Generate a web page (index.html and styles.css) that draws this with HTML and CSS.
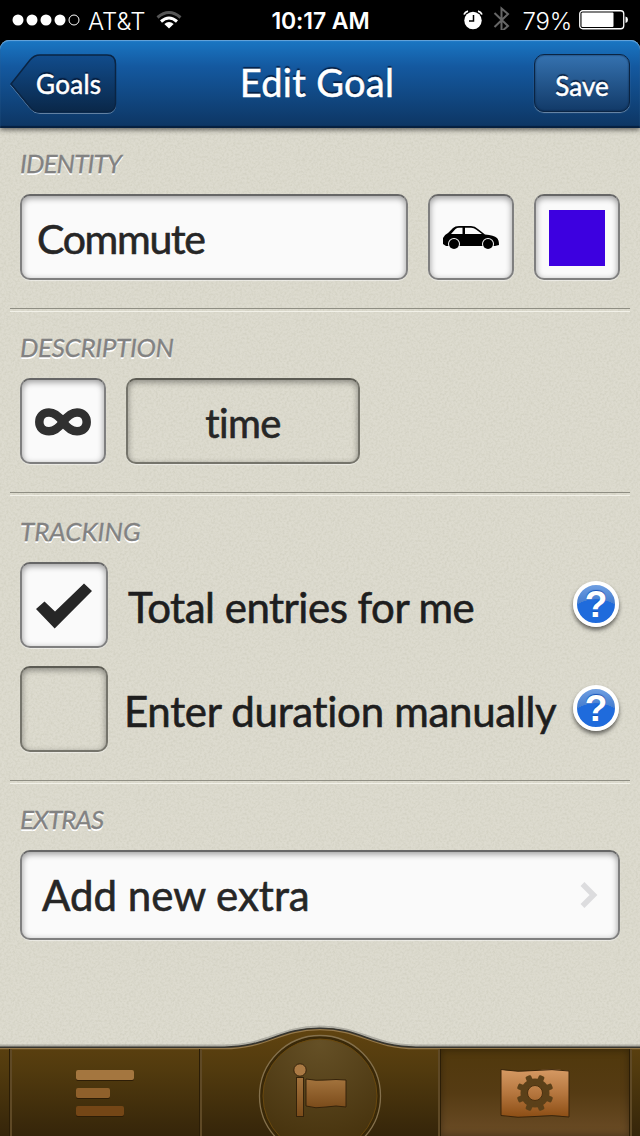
FILE: index.html
```html
<!DOCTYPE html>
<html lang="en">
<head>
    <meta charset="UTF-8">
    <meta name="viewport" content="width=device-width, initial-scale=1.0">
    <title>Edit Goal</title>
    <link rel="stylesheet" href="styles.css">
</head>
<body>

    <div class="status">
        <div class="status-left">
            <svg width="68" height="12" viewBox="0 0 68 12" fill="#fff">
                <circle cx="6" cy="6" r="5.5"/><circle cx="20" cy="6" r="5.5"/><circle cx="34" cy="6" r="5.5"/><circle cx="48" cy="6" r="5.5"/>
                <circle cx="62" cy="6" r="5" fill="none" stroke="#fff"/>
            </svg>
            <span class="carrier">AT&amp;T</span>
            <svg class="wifi" width="26" height="20" viewBox="0 0 26 20" fill="none" stroke="#fff" stroke-width="3">
                <path d="M1.5 7.5Q13-2.5 24.5 7.5" stroke="#555"/>
                <path d="M5 11.5Q13 4.5 21 11.5"/>
                <path d="M13 18.5L8.3 14Q13 10 17.7 14Z" fill="#fff" stroke="none"/>
            </svg>
        </div>
        <span class="clock">10:17 AM</span>
        <div class="status-right">
            <svg class="alarm" width="20" height="20" viewBox="0 0 20 20">
                <circle cx="10" cy="10.5" r="8.7" fill="#fff"/>
                <path d="M1 4.5Q2 2 5 1.2M19 4.5Q18 2 15 1.2" fill="none" stroke="#fff" stroke-width="1.8"/>
                <path d="M10.5 5V11H6" fill="none" stroke="#000" stroke-width="1.5"/>
            </svg>
            <svg class="bluetooth" width="18" height="28" viewBox="0 0 18 28" fill="none" stroke="#666" stroke-width="2">
                <path d="M1.5 7L15 20L8.5 25.5V2.5L15 8L1.5 21"/>
            </svg>
            <span class="percent">79%</span>
            <svg class="battery" width="50" height="20" viewBox="0 0 50 20">
                <rect x=".75" y=".75" width="44" height="18" rx="3" fill="none" stroke="#fff" stroke-width="1.3"/>
                <rect x="2.5" y="2.5" width="32" height="14.5" rx="1" fill="#fff"/>
                <path d="M46.5 6.5Q49 7 49 9.75T46.5 13Z" fill="#fff"/>
            </svg>
        </div>
    </div>

    <header class="navbar">
        <a class="back">
            <svg class="back-shape" width="108" height="62" viewBox="0 0 108 62">
                <defs>
                    <linearGradient id="backFill" x1="0" y1="0" x2="0" y2="1">
                        <stop offset="0" stop-color="#114c8c"/>
                        <stop offset="1" stop-color="#0a2748"/>
                    </linearGradient>
                </defs>
                <path d="M1 30L20 6Q24 1 30 1H97Q105.500 1 105.500 10V49Q105.500 58 97 58H30Q24 58 20 53Z" transform="translate(0 1.5)" fill="none" stroke="#fff" stroke-opacity=".35"/>
                <path d="M1 30L20 6Q24 1 30 1H97Q105.500 1 105.500 10V49Q105.500 58 97 58H30Q24 58 20 53Z" fill="url(#backFill)" stroke="#0a2443" stroke-width="1.5"/>
            </svg>
            <span class="back-text">Goals</span>
        </a>
        <h1>Edit Goal</h1>
        <a class="save">Save</a>
    </header>

    <main>
        <section>
            <h2 class="tight">IDENTITY</h2>
            <div class="row">
                <div class="box name">Commute</div>
                <div class="box square">
                    <svg width="56" height="24" viewBox="0 0 56 24">
                        <path d="M3 20L0 18V12Q1 9 5 7L10 2Q12 0 16 0H28Q32 0 35 3L42 8.5Q51 9 54 12Q56 14 56 19L52 20Z"/>
                        <path d="M8 8L12.5 3Q14 1.8 16 1.8H19.5V8ZM22 1.8H28Q31 1.8 33 3.5L39 8H22Z" fill="#fafafa"/>
                        <circle cx="11" cy="18" r="6" fill="#fafafa"/><circle cx="45" cy="18" r="6" fill="#fafafa"/>
                        <circle cx="11" cy="18" r="5"/><circle cx="45" cy="18" r="5"/>
                    </svg>
                </div>
                <div class="box square"><div class="swatch"></div></div>
            </div>
        </section>

        <section>
            <h2 class="wide">DESCRIPTION</h2>
            <div class="row">
                <div class="box square">
                    <svg width="56" height="28" viewBox="0 0 56 28" fill="none" stroke="#303030" stroke-width="8.5">
                        <path d="M28 14C23 7 19 4.5 14 4.5C8 4.5 4.3 8.5 4.3 14S8 23.3 14 23.3C19 23.3 23 21 28 14C33 7 37 4.5 42 4.5C48 4.5 51.7 8.5 51.7 14S48 23.3 42 23.3C37 23.3 33 21 28 14Z"/>
                    </svg>
                </div>
                <div class="box empty unit">time</div>
            </div>
        </section>

        <section>
            <h2>TRACKING</h2>
            <div class="option">
                <div class="box check">
                    <svg width="56" height="46" viewBox="0 0 56 46"><path d="M0 26L8.5 18.5L19 28.5L48 .5L56 8L18.7 45.5Z" fill="#262626"/></svg>
                </div>
                <span class="label">Total entries for me</span>
                <span class="help">?</span>
            </div>
            <div class="option">
                <div class="box empty check"></div>
                <span class="label manual">Enter duration manually</span>
                <span class="help">?</span>
            </div>
        </section>

        <section>
            <h2 class="tight">EXTRAS</h2>
            <div class="box extra">
                <span>Add new extra</span>
                <svg width="18" height="28" viewBox="0 0 18 28" fill="none" stroke="#dcdcde" stroke-width="5.5"><path d="M2.5 3L13.5 14L2.5 25"/></svg>
            </div>
        </section>
    </main>

    <nav class="tabbar">
        <svg class="tabbar-shape" width="640" height="112" viewBox="0 1024 640 112">
            <defs>
                <linearGradient id="wood" gradientUnits="userSpaceOnUse" x1="0" y1="1028" x2="0" y2="1136">
                    <stop offset="0" stop-color="#614410"/>
                    <stop offset=".4" stop-color="#513a0e"/>
                    <stop offset="1" stop-color="#35250a"/>
                </linearGradient>
                <radialGradient id="dial" cx=".5" cy=".05" r=".9">
                    <stop offset="0" stop-color="#655026"/>
                    <stop offset="1" stop-color="#46320d"/>
                </radialGradient>
            </defs>
            <path d="M0 1047H224C268 1047 279 1028 320 1028S372 1047 416 1047H640V1137H0Z" fill="url(#wood)"/>
            <path d="M0 1046.5H224C268 1046.5 279 1027.5 320 1027.5S372 1046.5 416 1046.5H640" fill="none" stroke="#000" stroke-opacity=".2" stroke-width="4"/>
            <path d="M0 1047.3H224C268 1047.3 279 1028.3 320 1028.3S372 1047.3 416 1047.3H640" fill="none" stroke="#37352e" stroke-width="1.8"/>
            <path d="M0 1048.7H224C268 1048.7 279 1029.7 320 1029.7S372 1048.7 416 1048.7H640" fill="none" stroke="#93774a" stroke-width="1.2"/>
            <circle cx="320" cy="1096" r="58.5" fill="url(#dial)" stroke="#392808" stroke-width="3"/>
            <circle cx="320" cy="1096" r="60.5" fill="none" stroke="#84704c" stroke-width="1.3"/>
            <circle cx="320" cy="1096" r="57" fill="none" stroke="#69480e" stroke-width="1"/>
        </svg>
        <div class="edge"></div>
        <a class="tab">
            <svg width="60" height="48" viewBox="0 0 60 48">
                <rect x="1" y="2" width="58" height="10" rx="2" fill="#2d1d06"/><rect x="1" y="1" width="58" height="10" rx="2" fill="#a4763f"/>
                <rect x="1" y="20" width="34" height="10" rx="2" fill="#2d1d06"/><rect x="1" y="19" width="34" height="10" rx="2" fill="#8f602b"/>
                <rect x="1" y="38" width="48" height="10" rx="2" fill="#2d1d06"/><rect x="1" y="37" width="48" height="10" rx="2" fill="#744616"/>
            </svg>
        </a>
        <a class="tab middle">
            <svg width="54" height="56" viewBox="293 1062 54 56">
                <defs>
                    <linearGradient id="flag" x1="0" y1="0" x2="0" y2="1">
                        <stop offset="0" stop-color="#a3733d"/>
                        <stop offset="1" stop-color="#7a4b1a"/>
                    </linearGradient>
                </defs>
                <g stroke="#35230a" stroke-width="1">
                    <circle cx="300" cy="1070" r="6.2" fill="#ab7a44"/>
                    <rect x="296.5" y="1077.5" width="7" height="39" fill="url(#flag)"/>
                    <path d="M306 1079Q316 1081 326 1080T346 1080V1107Q336 1105 326 1107T306 1106Z" fill="url(#flag)"/>
                </g>
            </svg>
        </a>
        <a class="tab selected">
            <svg width="70" height="50" viewBox="500 1068 70 50">
                <defs>
                    <linearGradient id="copper" gradientUnits="userSpaceOnUse" x1="0" y1="1069" x2="0" y2="1117">
                        <stop offset="0" stop-color="#d69a64"/>
                        <stop offset=".5" stop-color="#b6773f"/>
                        <stop offset="1" stop-color="#8c4e15"/>
                    </linearGradient>
                </defs>
                <path d="M501 1069.5Q518 1072.5 535 1070.5T569 1071V1117Q552 1114.5 535 1116.5T501 1115.5Z" fill="url(#copper)" stroke="#3a250b" stroke-width="1"/>
                <g fill="#5b4019">
                    <circle cx="535" cy="1093" r="14.5"/>
                    <rect x="532" y="1074.5" width="6" height="37" rx="1.5" transform="rotate(22.5 535 1093)"/>
                    <rect x="532" y="1074.5" width="6" height="37" rx="1.5" transform="rotate(67.5 535 1093)"/>
                    <rect x="532" y="1074.5" width="6" height="37" rx="1.5" transform="rotate(112.5 535 1093)"/>
                    <rect x="532" y="1074.5" width="6" height="37" rx="1.5" transform="rotate(157.5 535 1093)"/>
                </g>
                <circle cx="535" cy="1093" r="7.5" fill="url(#copper)" stroke="#4a300f"/>
            </svg>
        </a>
        <div class="edge"></div>
    </nav>

</body>
</html>
```
FILE: styles.css
```css
* {
    box-sizing: border-box;
}

body {
    margin: 0;
    height: 1136px;
    display: flex;
    flex-direction: column;
    overflow: hidden;
    background-color: #dddbcf;
    background-image: url("data:image/svg+xml,%3Csvg xmlns='http://www.w3.org/2000/svg' width='160' height='160'%3E%3Cfilter id='n'%3E%3CfeTurbulence type='fractalNoise' baseFrequency='.45' numOctaves='2' stitchTiles='stitch'/%3E%3CfeColorMatrix values='0 0 0 0 .3 0 0 0 0 .3 0 0 0 0 .2 .3 0 0 0 -.11'/%3E%3C/filter%3E%3Crect width='160' height='160' filter='url(%23n)'/%3E%3C/svg%3E");
    font-family: Lato, "Open Sans", sans-serif;
    font-size: 42px;
    font-variant-ligatures: none;
    color: #262626;
}

/* status bar */
.status {
    height: 40px;
    flex: none;
    display: grid;
    grid-template-columns: 1fr auto 1fr;
    align-items: center;
    padding: 0 11px 0 12px;
    background: #000;
    color: #fff;
    font-family: Inter, "Liberation Sans", sans-serif;
    font-size: 23px;
}

.status-left, .status-right {
    display: flex;
    align-items: center;
}

.status-right {
    justify-content: flex-end;
}

.carrier {
    margin-left: 8px;
    padding-top: 2px;
    font-size: 24px;
    font-weight: 300;
}

.wifi {
    margin-left: 11px;
}

.clock {
    padding-top: 2px;
    font-weight: 600;
    letter-spacing: -0.1px;
}

.alarm {
    margin-right: -2px;
}

.bluetooth {
    margin: 0 11px 0 12px;
}

.percent {
    padding-top: 2px;
    font-weight: 300;
    font-size: 24px;
    letter-spacing: -0.2px;
}

.battery {
    margin-left: 7px;
}

/* navigation bar */
.navbar {
    height: 88px;
    flex: none;
    display: grid;
    grid-template-columns: 108px 1fr 96px;
    padding: 14px 10px 0;
    color: #fff;
    background: linear-gradient(#1a77c4, #1459a0 30%, #0d3562);
    border-radius: 9px 9px 0 0;
    box-shadow: inset 0 1px 1px #6aa7dc, inset 0 -2px 1px #06203f, 0 2px 5px rgba(0, 0, 0, 0.55), 0 -10px 0 #000;
    text-shadow: 0 -2px 1px rgba(0, 15, 40, 0.75);
    -webkit-text-stroke: 0.5px #fff;
}

.back {
    display: grid;
}

.back-shape, .back-text {
    grid-area: 1 / 1;
}

.back-text {
    padding: 14px 0 0 26px;
    font-size: 26px;
    line-height: 32px;
    letter-spacing: 0.3px;
}

h1 {
    margin: 0;
    padding-right: 18px;
    font-size: 38px;
    line-height: 56px;
    font-weight: normal;
    letter-spacing: 0.3px;
    text-align: center;
}

.save {
    height: 58px;
    padding-top: 2px;
    border: 1px solid #0a2443;
    border-radius: 10px;
    background: linear-gradient(#3572b0, #123a68);
    box-shadow: 0 1px 1px rgba(255, 255, 255, 0.4), inset 0 0 2px #0a2443;
    font-size: 26px;
    line-height: 58px;
    text-align: center;
}

/* form */
main {
    flex: 1;
    padding: 0 10px;
}

section {
    padding: 0 10px 28px;
    position: relative;
}

section + section {
    border-top: 1px solid #8f8e83;
    padding-top: 3px;
}

section + section::before {
    content: "";
    position: absolute;
    top: 2px;
    left: 0;
    right: 0;
    height: 1px;
    background: #f2f1e8;
}

h2 {
    margin: 0;
    height: 66px;
    padding-top: 2px;
    font-size: 26px;
    line-height: 66px;
    font-weight: normal;
    font-style: italic;
    color: #828282;
    text-shadow: 0 2px 0 #fff;
    -webkit-text-stroke: 0.3px;
}

.tight {
    letter-spacing: -0.9px;
}

.wide {
    letter-spacing: -0.35px;
}

.row {
    display: flex;
    gap: 20px;
}

.box {
    height: 86px;
    display: flex;
    align-items: center;
    justify-content: center;
    border: 2px solid #7f7f7f;
    border-top-color: #666;
    border-radius: 10px;
    background: #fafafa;
    box-shadow: inset 0 2px 6px rgba(0, 0, 0, 0.4), 0 1px 1px rgba(255, 255, 255, 0.5);
}

.name, .unit, .label, .extra {
    -webkit-text-stroke: 0.6px;
}

.empty {
    background: none;
    border-color: #75746b;
    border-top-color: #5c5b53;
}

.name {
    flex: 1;
    justify-content: flex-start;
    padding: 3px 0 0 15px;
    font-size: 41px;
    letter-spacing: -1.3px;
}

.square {
    width: 86px;
    padding-top: 2px;
}

.swatch {
    width: 56px;
    height: 56px;
    background: #3d00e0;
}

.unit {
    width: 234px;
    padding-top: 3px;
    font-size: 40px;
    letter-spacing: -0.6px;
}

.option {
    display: flex;
    align-items: center;
}

.option + .option {
    margin-top: 18px;
}

.check {
    width: 88px;
    flex: none;
    padding-top: 1px;
}

.label {
    flex: 1;
    padding: 3px 0 0 20px;
    letter-spacing: -0.5px;
    color: #1e1e1e;
    white-space: nowrap;
}

.manual {
    padding-left: 16px;
    letter-spacing: -0.3px;
}

.help {
    width: 46px;
    height: 46px;
    margin: 0 1px 2px 0;
    flex: none;
    border: 4px solid #fff;
    border-radius: 50%;
    background: radial-gradient(ellipse 26px 17px at 50% 82%, #1f6bdc 98%, transparent 100%), linear-gradient(#6f9fe2, #3f78cc 55%);
    box-shadow: 0 3px 4px rgba(0, 0, 0, 0.55);
    color: #fff;
    font: bold 37px/40px "Liberation Sans", sans-serif;
    text-align: center;
    text-shadow: 0 -1px 1px #1550b5;
}

.extra {
    height: 90px;
    justify-content: space-between;
    padding: 0 20px;
}

/* tab bar */
.tabbar {
    position: relative;
    height: 88px;
    flex: none;
    display: grid;
    grid-template-columns: 10px 190px 240px 190px 10px;
}

.tabbar-shape {
    position: absolute;
    left: 0;
    bottom: 0;
}

.tab {
    position: relative;
    display: flex;
    align-items: center;
    justify-content: center;
    padding-top: 1px;
}

.middle {
    padding: 0 0 5px;
}

.tab, .tabbar .edge:last-child {
    margin-top: 1px;
    box-shadow: inset 2px 0 0 #5f4925, -1px 0 0 #2b1d06;
}

.edge {
    position: relative;
}

.selected {
    background: linear-gradient(#50380c, #553b13 50%, #6b4c26);
    box-shadow: inset 1px 0 0 #2b1d06, -2px 0 0 #5f4925, inset 0 0 8px rgba(0, 0, 0, 0.4);
}
```
